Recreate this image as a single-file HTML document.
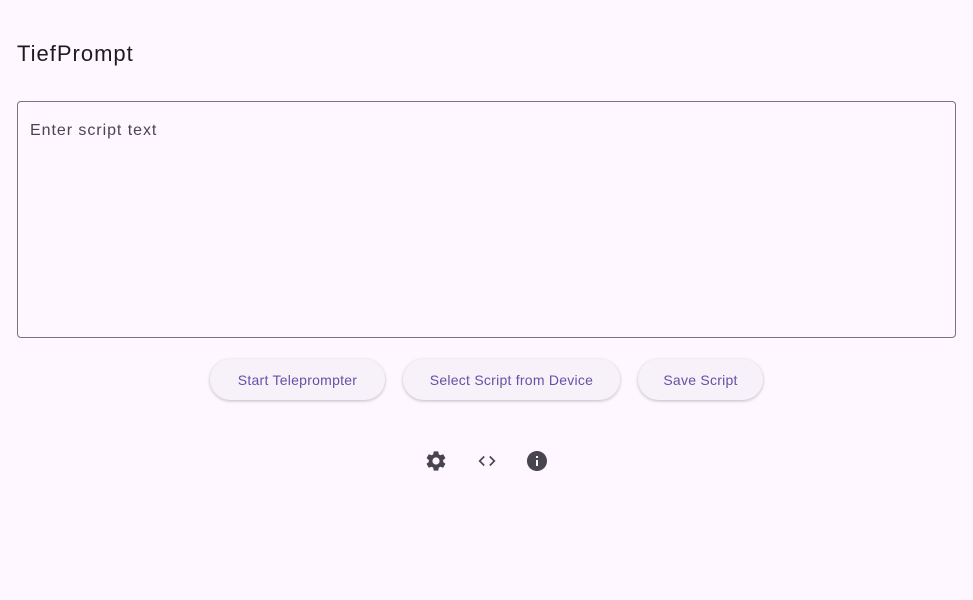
<!DOCTYPE html>
<html><head><meta charset="utf-8"><style>
body{margin:0;width:973px;height:600px;background:#fef7ff;font-family:"Liberation Sans",sans-serif;position:relative;overflow:hidden}
.t{position:absolute;left:17px;top:41px;font-size:22px;color:#1d1b20;letter-spacing:1px}
.box{position:absolute;left:17px;top:101px;width:937px;height:235px;border:1px solid #79747e;border-radius:4px}
.ph{position:absolute;left:30px;top:122px;font-size:16px;color:#49454f;letter-spacing:0.95px}
.b{position:absolute;top:359px;height:41px;border-radius:21px;background:#f7f2fa;box-shadow:0 1px 3px rgba(0,0,0,.25);color:#6750a4;font-size:14px;line-height:42px;text-align:center;letter-spacing:0.25px}
svg{position:absolute;top:449px}
</style></head><body>
<div class="t">TiefPrompt</div>
<div class="box"></div>
<div class="ph">Enter script text</div>
<div class="b" style="left:210px;width:175px">Start Teleprompter</div>
<div class="b" style="left:403px;width:217px">Select Script from Device</div>
<div class="b" style="left:638px;width:125px">Save Script</div>
<svg style="left:424px" width="24" height="24" viewBox="0 0 24 24"><path fill="#49454f" d="M19.14 12.94c.04-.3.06-.61.06-.94s-.02-.64-.07-.94l2.03-1.58a.49.49 0 0 0 .12-.61l-1.92-3.32a.49.49 0 0 0-.59-.22l-2.39.96c-.5-.38-1.030-.7-1.62-.94l-.36-2.54a.48.48 0 0 0-.48-.41h-3.84c-.24 0-.43.17-.47.41l-.36 2.54c-.59.24-1.13.57-1.62.94l-2.39-.96a.48.48 0 0 0-.59.22L2.74 8.87c-.12.21-.08.47.12.61l2.03 1.58c-.05.3-.09.63-.09.94s.02.64.07.94l-2.03 1.58a.49.49 0 0 0-.12.61l1.920 3.32c.12.22.37.29.59.22l2.39-.96c.5.38 1.03.7 1.62.94l.36 2.54c.05.24.24.41.48.41h3.84c.24 0 .44-.17.47-.41l.36-2.54c.59-.24 1.13-.56 1.62-.94l2.39.96c.22.08.47 0 .59-.22l1.92-3.32c.12-.22.07-.47-.12-.61l-2.01-1.58zM12 15.6A3.6 3.6 0 1 1 12 8.4a3.6 3.6 0 0 1 0 7.2z"/></svg>
<svg style="left:475px" width="24" height="24" viewBox="0 0 24 24"><path fill="#49454f" d="M9.4 16.6 4.8 12l4.6-4.6L8 6l-6 6 6 6 1.4-1.4zm5.2 0 4.6-4.6-4.6-4.6L16 6l6 6-6 6-1.4-1.4z" transform="translate(12 12) scale(.85) translate(-12 -12)"/></svg>
<svg style="left:525px" width="24" height="24" viewBox="0 0 24 24"><path fill="#49454f" d="M12 2C6.48 2 2 6.48 2 12s4.48 10 10 10 10-4.48 10-10S17.52 2 12 2zm1 15h-2v-6h2v6zm0-8h-2V7h2v2z"/></svg>
</body></html>
